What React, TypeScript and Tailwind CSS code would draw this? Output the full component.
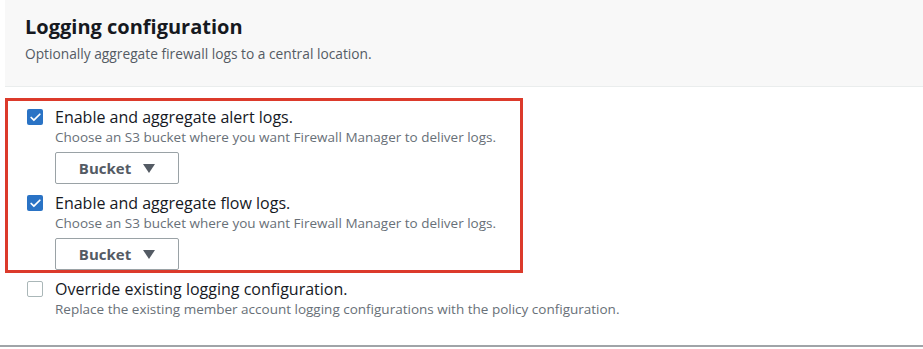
import { Check } from 'lucide-react';

interface Option {
    label: string;
    description: string;
    checked: boolean;
    bucket: boolean;
}

const options: Option[] = [
    {
        label: 'Enable and aggregate alert logs.',
        description: 'Choose an S3 bucket where you want Firewall Manager to deliver logs.',
        checked: true,
        bucket: true,
    },
    {
        label: 'Enable and aggregate flow logs.',
        description: 'Choose an S3 bucket where you want Firewall Manager to deliver logs.',
        checked: true,
        bucket: true,
    },
];

function Checkbox({ checked }: { checked: boolean }) {
    return checked ? (
        <div className="w-[16px] h-[16px] rounded-[2px] bg-[#2a73c5] flex items-center justify-center shrink-0 mt-[2px]">
            <Check size={13} strokeWidth={3.2} className="text-white" />
        </div>
    ) : (
        <div className="w-[16px] h-[16px] rounded-[2px] border border-[#aab7b8] bg-white shrink-0 mt-[2px]" />
    );
}

function BucketButton() {
    return (
        <button className="mt-[5px] w-[124px] h-[32px] border border-[#9aa2a6] rounded-[2px] bg-white flex items-center justify-center gap-[12px] text-[15px] font-bold text-[#545b64]">
            <span>Bucket</span>
            <svg width="12" height="9" viewBox="0 0 12 9">
                <path d="M0 0 L12 0 L6 9 Z" fill="#545b64" />
            </svg>
        </button>
    );
}

function OptionRow({ opt }: { opt: Option }) {
    return (
        <div className="flex gap-[12px]">
            <Checkbox checked={opt.checked} />
            <div className="flex flex-col">
                <span className="text-[16px] leading-[20px] text-[#16191f]">{opt.label}</span>
                <span className="text-[13.5px] leading-[20px] text-[#687078]">{opt.description}</span>
                {opt.bucket && <BucketButton />}
            </div>
        </div>
    );
}

export default function App() {
    return (
        <div className="w-[923px] h-[349px] bg-white overflow-hidden font-['Open_Sans',sans-serif]">
            {/* Header */}
            <div className="ml-[5px] h-[87px] bg-[#f8f8f8] border-b border-[#eaeded] pl-[20px] pt-[14px]">
                <h2 className="text-[20px] leading-[26px] font-bold text-[#16191f]">Logging configuration</h2>
                <p className="mt-[4px] text-[13.75px] leading-[19px] text-[#545b64]">
                    Optionally aggregate firewall logs to a central location.
                </p>
            </div>

            {/* Highlighted options */}
            <div className="mt-[11px] ml-[5px] w-[518px] h-[175px] border-[3px] border-[#dc3a2b] pl-[19px] pt-[6px] flex flex-col gap-[9px]">
                {options.map((opt, i) => (
                    <OptionRow key={i} opt={opt} />
                ))}
            </div>

            {/* Override */}
            <div className="mt-[6px] ml-[27px]">
                <OptionRow
                    opt={{
                        label: 'Override existing logging configuration.',
                        description:
                            'Replace the existing member account logging configurations with the policy configuration.',
                        checked: false,
                        bucket: false,
                    }}
                />
            </div>

            <div className="mt-[26px] h-[2px] bg-[#a0a4a8]" />
        </div>
    );
}
